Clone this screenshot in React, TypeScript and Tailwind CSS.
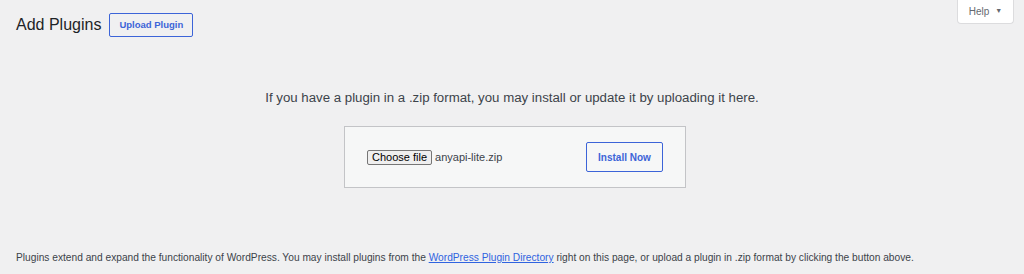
export default function App() {
  return (
    <div className="w-[1024px] h-[274px] bg-[#f0f0f1] font-['Liberation_Sans',Arial,sans-serif] text-[#3c434a] flex flex-col overflow-hidden">
      {/* Header row */}
      <div className="flex items-start justify-between pl-4 pr-[10px]">
        <div className="flex items-center gap-[8px] pt-[13px]">
          <h1 className="text-[16px] leading-6 text-[#1d2327]">Add Plugins</h1>
          <button className="h-6 px-[9px] border border-[#3c64d8] rounded-[2px] text-[#3c64d8] text-[9.5px] font-bold bg-transparent">
            Upload Plugin
          </button>
        </div>
        <button className="h-6 w-[57px] bg-white border border-t-0 border-[#dcdcde] rounded-b-[4px] flex items-center justify-center gap-[6px] text-[10px] text-[#646970]">
          <span>Help</span>
          <span className="text-[7px]">▼</span>
        </button>
      </div>

      {/* Upload area */}
      <p className="mt-[53px] text-center text-[13.25px] leading-4 text-[#3c434a]">
        If you have a plugin in a .zip format, you may install or update it by uploading it here.
      </p>
      <div className="mt-[20px] mx-auto translate-x-[3px] w-[342px] h-[62px] bg-[#f6f7f7] border border-[#c3c4c7] flex items-center justify-between pl-[22px] pr-[22px]">
        <div className="flex items-center gap-[3px] text-[11px]">
          <span className="h-[15px] px-[4px] border border-[#767676] rounded-[2px] bg-[#efefef] text-black leading-[13px] text-[11px]">
            Choose file
          </span>
          <span className="text-[#3c434a]">anyapi-lite.zip</span>
        </div>
        <button className="h-[30px] w-[77px] border border-[#3c64d8] rounded-[2px] text-[#3c64d8] text-[10px] font-bold bg-transparent">
          Install Now
        </button>
      </div>

      {/* Footer note */}
      <p className="mt-[62px] pl-4 text-[10.2px] leading-4 text-[#3c434a]">
        Plugins extend and expand the functionality of WordPress. You may install plugins from the{" "}
        <a className="text-[#2f63e0] underline" href="#">WordPress Plugin Directory</a> right on this page, or upload a plugin in .zip format by clicking the button above.
      </p>
    </div>
  )
}
